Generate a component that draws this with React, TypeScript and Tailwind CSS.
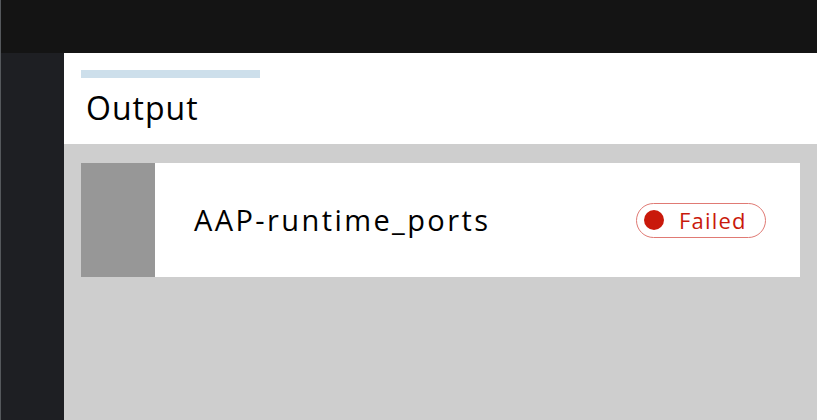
export default function App() {
  return (
    <div className="flex h-[420px] w-[817px] flex-col overflow-hidden bg-[#cecece] font-['Open_Sans',sans-serif]">
      <div className="h-[53px] shrink-0 border-l border-[#55585c] bg-[#141414]" />
      <div className="flex min-h-0 flex-1">
        <aside className="w-[64px] shrink-0 border-l border-[#55585c] bg-[#1e1f23]" />
        <main className="flex min-w-0 flex-1 flex-col">
          <header className="h-[91px] bg-white px-[17px] pt-[17px]">
            <div className="h-[8px] w-[179px] bg-[#cddfeb]" />
            <h1 className="ml-[5px] mt-[10px] text-[32px] leading-[40px] tracking-[1px] text-black">Output</h1>
          </header>
          <section className="px-[17px] pt-[19px]">
            <div className="flex h-[114px] items-center bg-white">
              <div className="h-full w-[74px] bg-[#979797]" />
              <div className="ml-[39px] flex-1 text-[29px] tracking-[2.4px] text-black">AAP-runtime_ports</div>
              <span className="mr-[34px] flex h-[35px] w-[130px] items-center rounded-full border border-[#e07a74] pl-[7px]">
                <span className="h-[20px] w-[20px] rounded-full bg-[#c9190b]" />
                <span className="ml-[15px] text-[22px] tracking-[1.2px] text-[#c9190b]">Failed</span>
              </span>
            </div>
          </section>
        </main>
      </div>
    </div>
  );
}
